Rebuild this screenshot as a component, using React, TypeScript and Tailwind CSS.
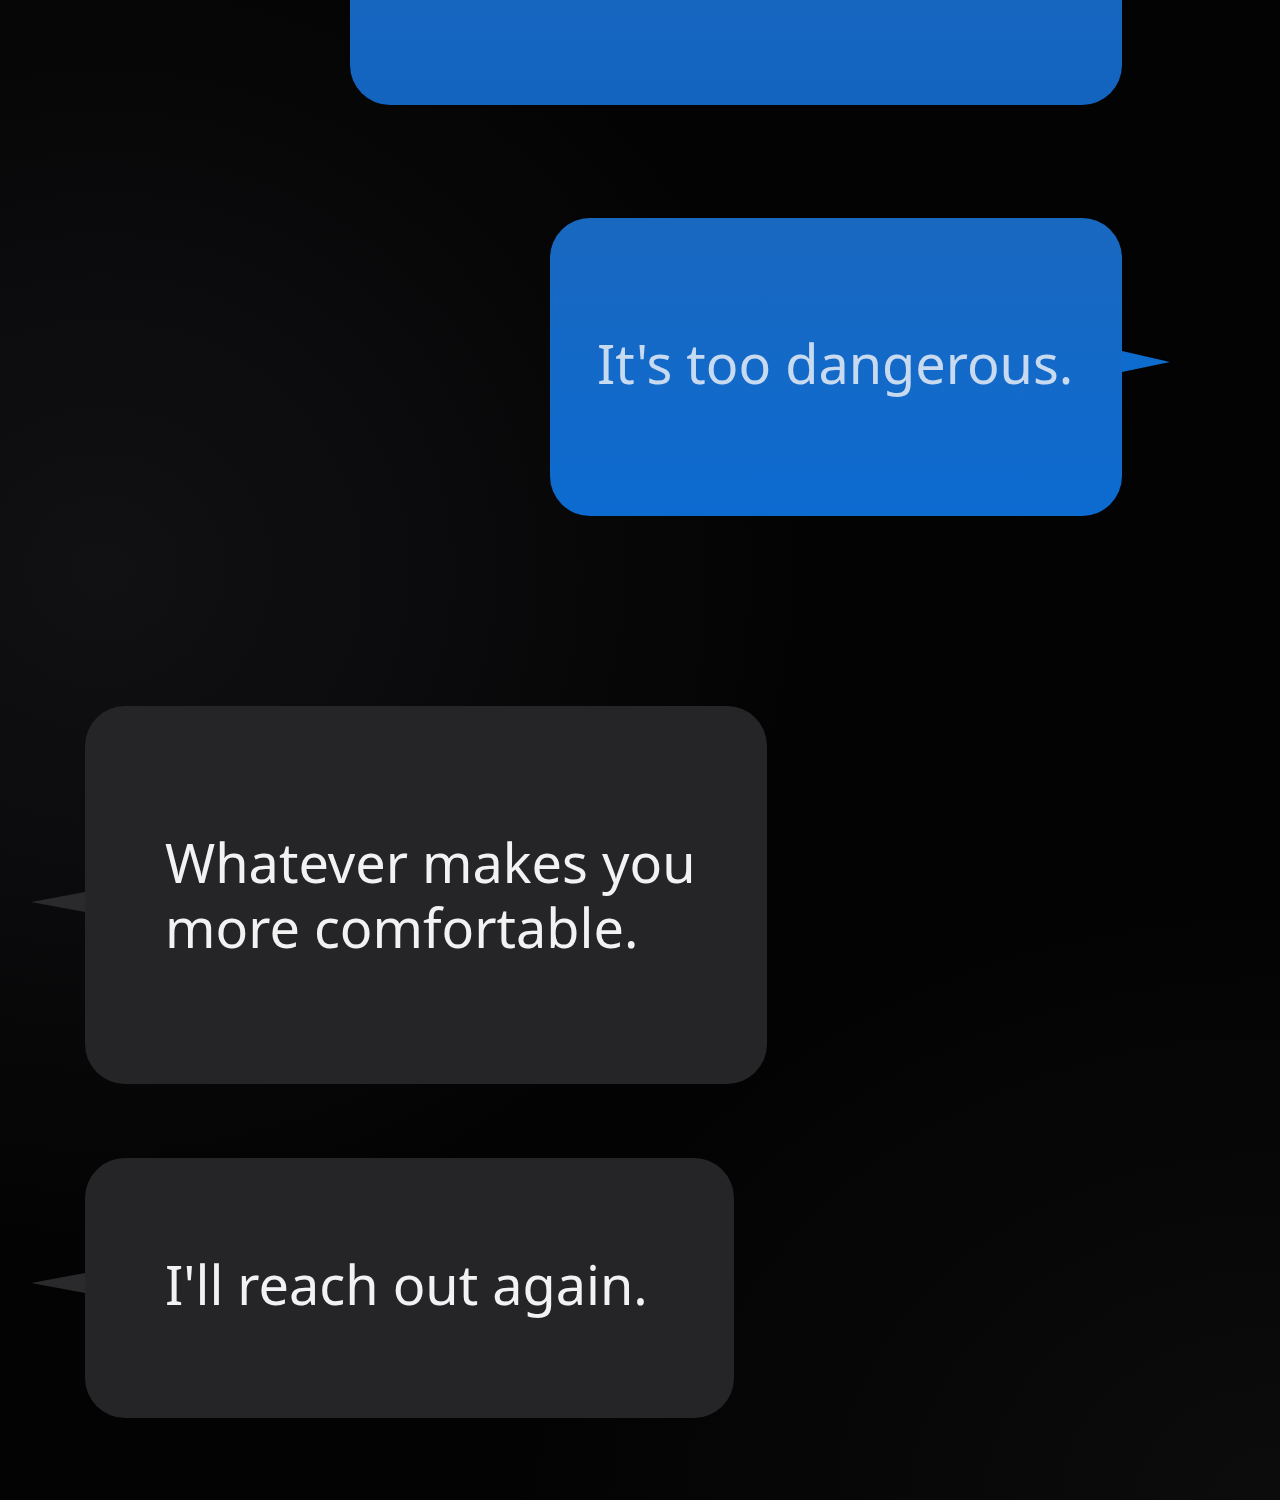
import React from 'react';

type Side = 'in' | 'out';

interface BubbleProps {
  side: Side;
  className: string;
  tailY?: number;
  children?: React.ReactNode;
}

// Small pointed tail that sticks out of the bubble's outer edge
const Tail: React.FC<{ side: Side; y: number }> = ({ side, y }) => {
  if (side === 'out') {
    return (
      <svg
        className="absolute left-full"
        style={{ top: y - 12 }}
        width="50"
        height="24"
        viewBox="0 0 50 24"
      >
        <path d="M0 1 L48 12 L0 22 Z" fill="#0e6ccf" />
      </svg>
    );
  }
  return (
    <svg
      className="absolute right-full"
      style={{ top: y - 12 }}
      width="54"
      height="24"
      viewBox="0 0 54 24"
    >
      <path d="M54 2 L0 12 L54 22 Z" fill="#2a2a2d" />
    </svg>
  );
};

const Bubble: React.FC<BubbleProps> = ({ side, className, tailY, children }) => (
  <div
    className={`relative flex shrink-0 items-center rounded-[40px] ${
      side === 'out'
        ? 'bg-gradient-to-b from-[#1968c0] to-[#0c6bd0] text-[#c8daf0]'
        : 'bg-[#252528] text-[#f2f2f2]'
    } ${className}`}
  >
    {tailY !== undefined && <Tail side={side} y={tailY} />}
    {children}
  </div>
);

export default function App() {
  return (
    <div
      className="flex h-[1500px] w-[1280px] flex-col overflow-hidden bg-[#030303] bg-[radial-gradient(ellipse_55%_45%_at_8%_38%,#111114_0%,#0b0b0d_45%,transparent_100%),radial-gradient(ellipse_60%_40%_at_100%_100%,#0c0c0c_0%,transparent_100%)]"
      style={{ fontFamily: '"Noto Sans", "Open Sans", sans-serif' }}
    >
      {/* previous message, scrolled partly off the top */}
      <Bubble side="out" className="-mt-[95px] ml-[350px] h-[200px] w-[772px] from-[#1a66b8] to-[#1264bf]" />

      <Bubble side="out" className="ml-[550px] mt-[113px] h-[298px] w-[572px] pb-[8px] pl-[47px]" tailY={144}>
        <p className="text-[54px] leading-[65px]">It's too dangerous.</p>
      </Bubble>

      <Bubble side="in" className="ml-[85px] mt-[190px] h-[378px] w-[682px] pl-[80px]" tailY={196}>
        <p className="text-[54px] leading-[65px]">
          Whatever makes you
          <br />
          more comfortable.
        </p>
      </Bubble>

      <Bubble side="in" className="ml-[85px] mt-[74px] h-[260px] w-[649px] pb-[8px] pl-[80px]" tailY={125}>
        <p className="text-[54px] leading-[65px]">I'll reach out again.</p>
      </Bubble>
    </div>
  );
}
